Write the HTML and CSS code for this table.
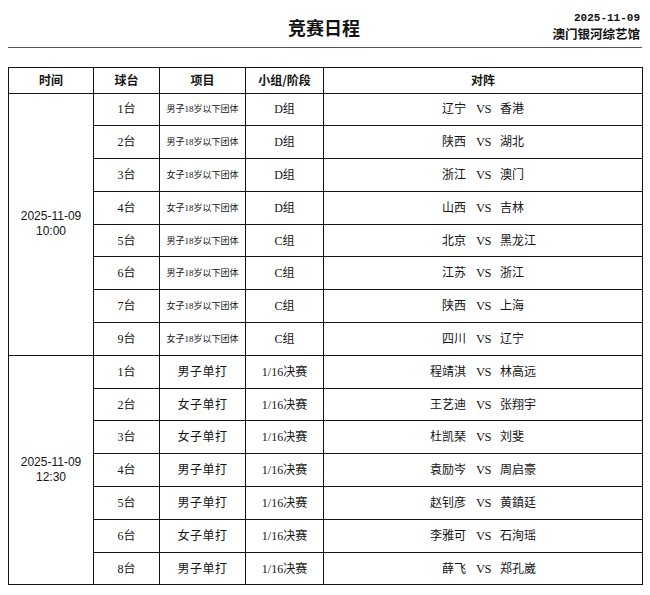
FILE: index.html
```html
<!DOCTYPE html>
<html lang="zh-CN">
<head>
<meta charset="utf-8">
<title>竞赛日程</title>
<link rel="stylesheet" href="styles.css">
</head>
<body>
<header class="top">
  <div class="spacer"></div>
  <h1 class="title">竞赛日程</h1>
  <div class="info">
    <div class="info-date">2025-11-09</div>
    <div class="info-venue">澳门银河综艺馆</div>
  </div>
</header>

<table class="sched">
  <colgroup>
    <col class="c-time"><col class="c-table"><col class="c-event"><col class="c-group"><col class="c-match">
  </colgroup>
  <thead>
    <tr><th>时间</th><th>球台</th><th>项目</th><th>小组/阶段</th><th>对阵</th></tr>
  </thead>
  <tbody>
    <tr>
      <td class="time" rowspan="8">2025-11-09<br>10:00</td>
      <td>1台</td><td class="ev-small">男子18岁以下团体</td><td>D组</td>
      <td><div class="match"><span class="l">辽宁</span><span class="vs">VS</span><span class="r">香港</span></div></td>
    </tr>
    <tr><td>2台</td><td class="ev-small">男子18岁以下团体</td><td>D组</td>
      <td><div class="match"><span class="l">陕西</span><span class="vs">VS</span><span class="r">湖北</span></div></td></tr>
    <tr><td>3台</td><td class="ev-small">女子18岁以下团体</td><td>D组</td>
      <td><div class="match"><span class="l">浙江</span><span class="vs">VS</span><span class="r">澳门</span></div></td></tr>
    <tr><td>4台</td><td class="ev-small">女子18岁以下团体</td><td>D组</td>
      <td><div class="match"><span class="l">山西</span><span class="vs">VS</span><span class="r">吉林</span></div></td></tr>
    <tr><td>5台</td><td class="ev-small">男子18岁以下团体</td><td>C组</td>
      <td><div class="match"><span class="l">北京</span><span class="vs">VS</span><span class="r">黑龙江</span></div></td></tr>
    <tr><td>6台</td><td class="ev-small">男子18岁以下团体</td><td>C组</td>
      <td><div class="match"><span class="l">江苏</span><span class="vs">VS</span><span class="r">浙江</span></div></td></tr>
    <tr><td>7台</td><td class="ev-small">女子18岁以下团体</td><td>C组</td>
      <td><div class="match"><span class="l">陕西</span><span class="vs">VS</span><span class="r">上海</span></div></td></tr>
    <tr><td>9台</td><td class="ev-small">女子18岁以下团体</td><td>C组</td>
      <td><div class="match"><span class="l">四川</span><span class="vs">VS</span><span class="r">辽宁</span></div></td></tr>

    <tr>
      <td class="time" rowspan="7">2025-11-09<br>12:30</td>
      <td>1台</td><td class="ev">男子单打</td><td>1/16决赛</td>
      <td><div class="match"><span class="l">程靖淇</span><span class="vs">VS</span><span class="r">林高远</span></div></td>
    </tr>
    <tr><td>2台</td><td class="ev">女子单打</td><td>1/16决赛</td>
      <td><div class="match"><span class="l">王艺迪</span><span class="vs">VS</span><span class="r">张翔宇</span></div></td></tr>
    <tr><td>3台</td><td class="ev">女子单打</td><td>1/16决赛</td>
      <td><div class="match"><span class="l">杜凯琹</span><span class="vs">VS</span><span class="r">刘斐</span></div></td></tr>
    <tr><td>4台</td><td class="ev">男子单打</td><td>1/16决赛</td>
      <td><div class="match"><span class="l">袁励岑</span><span class="vs">VS</span><span class="r">周启豪</span></div></td></tr>
    <tr><td>5台</td><td class="ev">男子单打</td><td>1/16决赛</td>
      <td><div class="match"><span class="l">赵钊彦</span><span class="vs">VS</span><span class="r">黄鎮廷</span></div></td></tr>
    <tr><td>6台</td><td class="ev">女子单打</td><td>1/16决赛</td>
      <td><div class="match"><span class="l">李雅可</span><span class="vs">VS</span><span class="r">石洵瑶</span></div></td></tr>
    <tr><td>8台</td><td class="ev">男子单打</td><td>1/16决赛</td>
      <td><div class="match"><span class="l">薛飞</span><span class="vs">VS</span><span class="r">郑孔崴</span></div></td></tr>
  </tbody>
</table>
</body>
</html>
```

FILE: styles.css
```css
html, body {
  margin: 0;
  padding: 0;
  background: #ffffff;
  color: #141414;
}

body {
  font-family: "Liberation Serif", "Noto Sans CJK SC", serif;
}

.top {
  display: grid;
  grid-template-columns: 1fr auto 1fr;
  align-items: start;
  margin: 0 8px 0 8px;
  padding: 11px 2px 4px 0;
  border-bottom: 1.5px solid #555555;
}

.title {
  margin: 4px 0 0 0;
  font-family: "Noto Sans CJK SC", sans-serif;
  font-size: 18px;
  line-height: 24px;
  font-weight: 700;
  text-align: center;
  color: #111111;
}

.info {
  justify-self: end;
  text-align: right;
}

.info-date {
  font-family: "Liberation Mono", monospace;
  font-weight: 700;
  font-size: 11px;
  line-height: 14px;
  color: #111111;
}

.info-venue {
  font-family: "Noto Sans CJK SC", sans-serif;
  font-weight: 700;
  font-size: 12.5px;
  line-height: 18px;
  color: #111111;
}

.sched {
  margin: 19px 0 0 8px;
  width: 634px;
  table-layout: fixed;
  border-collapse: collapse;
}

.c-time { width: 85px; }
.c-table { width: 66px; }
.c-event { width: 86px; }
.c-group { width: 78px; }
.c-match { width: 319px; }

.sched th,
.sched td {
  border: 1.5px solid #141414;
  padding: 0;
  text-align: center;
  vertical-align: middle;
}

.sched th {
  height: 24.5px;
  font-family: "Noto Sans CJK SC", sans-serif;
  font-weight: 700;
  font-size: 12px;
  line-height: 16px;
}

.sched td {
  height: 31.8px;
  font-size: 12px;
  line-height: 16px;
}

.sched td.time {
  font-family: "Liberation Sans", "Noto Sans CJK SC", sans-serif;
  font-size: 12px;
  line-height: 15px;
}

.sched td.ev-small {
  font-size: 9px;
}

.sched td.ev {
  font-size: 12px;
  letter-spacing: 0.5px;
}

.match {
  display: flex;
  align-items: center;
  gap: 10px;
}

.match .l {
  flex: 1;
  text-align: right;
}

.match .r {
  flex: 1;
  text-align: left;
}

.match .vs {
  font-size: 12.5px;
  width: 14px;
  text-align: center;
  letter-spacing: -0.5px;
}
```
